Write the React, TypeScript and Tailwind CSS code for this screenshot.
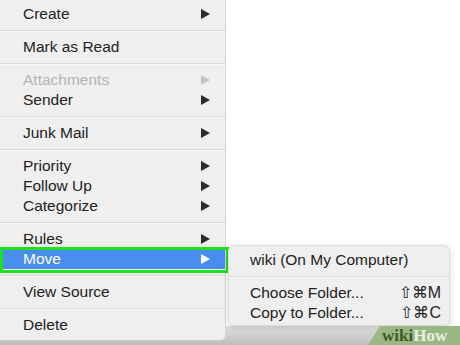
import React from "react";

const Arrow = ({ color = "#2a2a2a" }: { color?: string }) => (
  <svg width="9" height="10" viewBox="0 0 9 10" className="shrink-0">
    <polygon points="0,0 9,5 0,10" fill={color} />
  </svg>
);

type Item = { label: string; arrow?: boolean; disabled?: boolean; active?: boolean } | "sep";

const items: Item[] = [
  { label: "Create", arrow: true },
  "sep",
  { label: "Mark as Read" },
  "sep",
  { label: "Attachments", arrow: true, disabled: true },
  { label: "Sender", arrow: true },
  "sep",
  { label: "Junk Mail", arrow: true },
  "sep",
  { label: "Priority", arrow: true },
  { label: "Follow Up", arrow: true },
  { label: "Categorize", arrow: true },
  "sep",
  { label: "Rules", arrow: true },
  { label: "Move", arrow: true, active: true },
  "sep",
  { label: "View Source" },
  "sep",
  { label: "Delete" },
];

const Sep = () => (
  <div className="h-[13px] flex flex-col justify-center">
    <div className="h-px bg-[#dadada]" />
    <div className="h-px bg-[#f8f8f8]" />
  </div>
);

export default function App() {
  return (
    <div
      className="relative w-[460px] h-[345px] overflow-hidden bg-white"
      style={{ fontFamily: '"Liberation Sans", Arial, sans-serif' }}
    >
      {/* bottom shadow area */}
      <div className="absolute left-0 right-0 top-[326px] bottom-0 bg-gradient-to-b from-[#e2e2e2] to-[#bdbdbd]" />

      {/* main menu */}
      <div className="relative w-[226px] h-[340px] bg-[#efefef] border-r border-[#d6d6d6] rounded-br-[5px] pt-[4px] text-[15.5px] text-[#222]">
        {items.map((it, i) =>
          it === "sep" ? (
            <Sep key={i} />
          ) : (
            <div
              key={i}
              className={
                "h-[20px] flex items-center pl-[23px] pr-[15px] " +
                (it.active ? "bg-[#4a8df1] text-white" : it.disabled ? "text-[#b4b4b4]" : "")
              }
            >
              <span className="flex-1 leading-none">{it.label}</span>
              {it.arrow && (
                <Arrow color={it.active ? "#ffffff" : it.disabled ? "#c4c4c4" : "#2a2a2a"} />
              )}
            </div>
          )
        )}
      </div>

      {/* green annotation frame */}
      <div className="absolute left-0 top-[247px] w-[229px] h-[26px] border-[3px] border-[#1fe01f]" />

      {/* submenu */}
      <div className="absolute left-[228px] top-[245px] w-[222px] h-[81px] bg-[#efefef] rounded-[6px] border border-[#dcdcdc] shadow-[0_2px_6px_rgba(0,0,0,0.15)] pt-[4px] text-[15.5px] text-[#222]">
        <div className="h-[20px] flex items-center pl-[21px] pr-[8px]">
          <span className="leading-none">wiki (On My Computer)</span>
        </div>
        <Sep />
        <div className="h-[20px] flex items-center pl-[21px] pr-[8px]">
          <span className="flex-1 leading-none">Choose Folder...</span>
          <span className="leading-none text-[16px]">⇧⌘M</span>
        </div>
        <div className="h-[20px] flex items-center pl-[21px] pr-[8px]">
          <span className="flex-1 leading-none">Copy to Folder...</span>
          <span className="leading-none text-[16px]">⇧⌘C</span>
        </div>
      </div>

      {/* watermark */}
      <div
        className="absolute right-0 bottom-0 w-[92px] h-[19px] bg-[#9ab886] flex items-center pl-[14px]"
        style={{ clipPath: "polygon(12px 0, 100% 0, 100% 100%, 0 100%)" }}
      >
        <span
          className="text-[17px] font-bold leading-none"
          style={{ fontFamily: '"Liberation Serif", "Times New Roman", serif' }}
        >
          <span className="text-[#3d5a2a]">wiki</span>
          <span className="text-[#e8f0e0]">How</span>
        </span>
      </div>
    </div>
  );
}
